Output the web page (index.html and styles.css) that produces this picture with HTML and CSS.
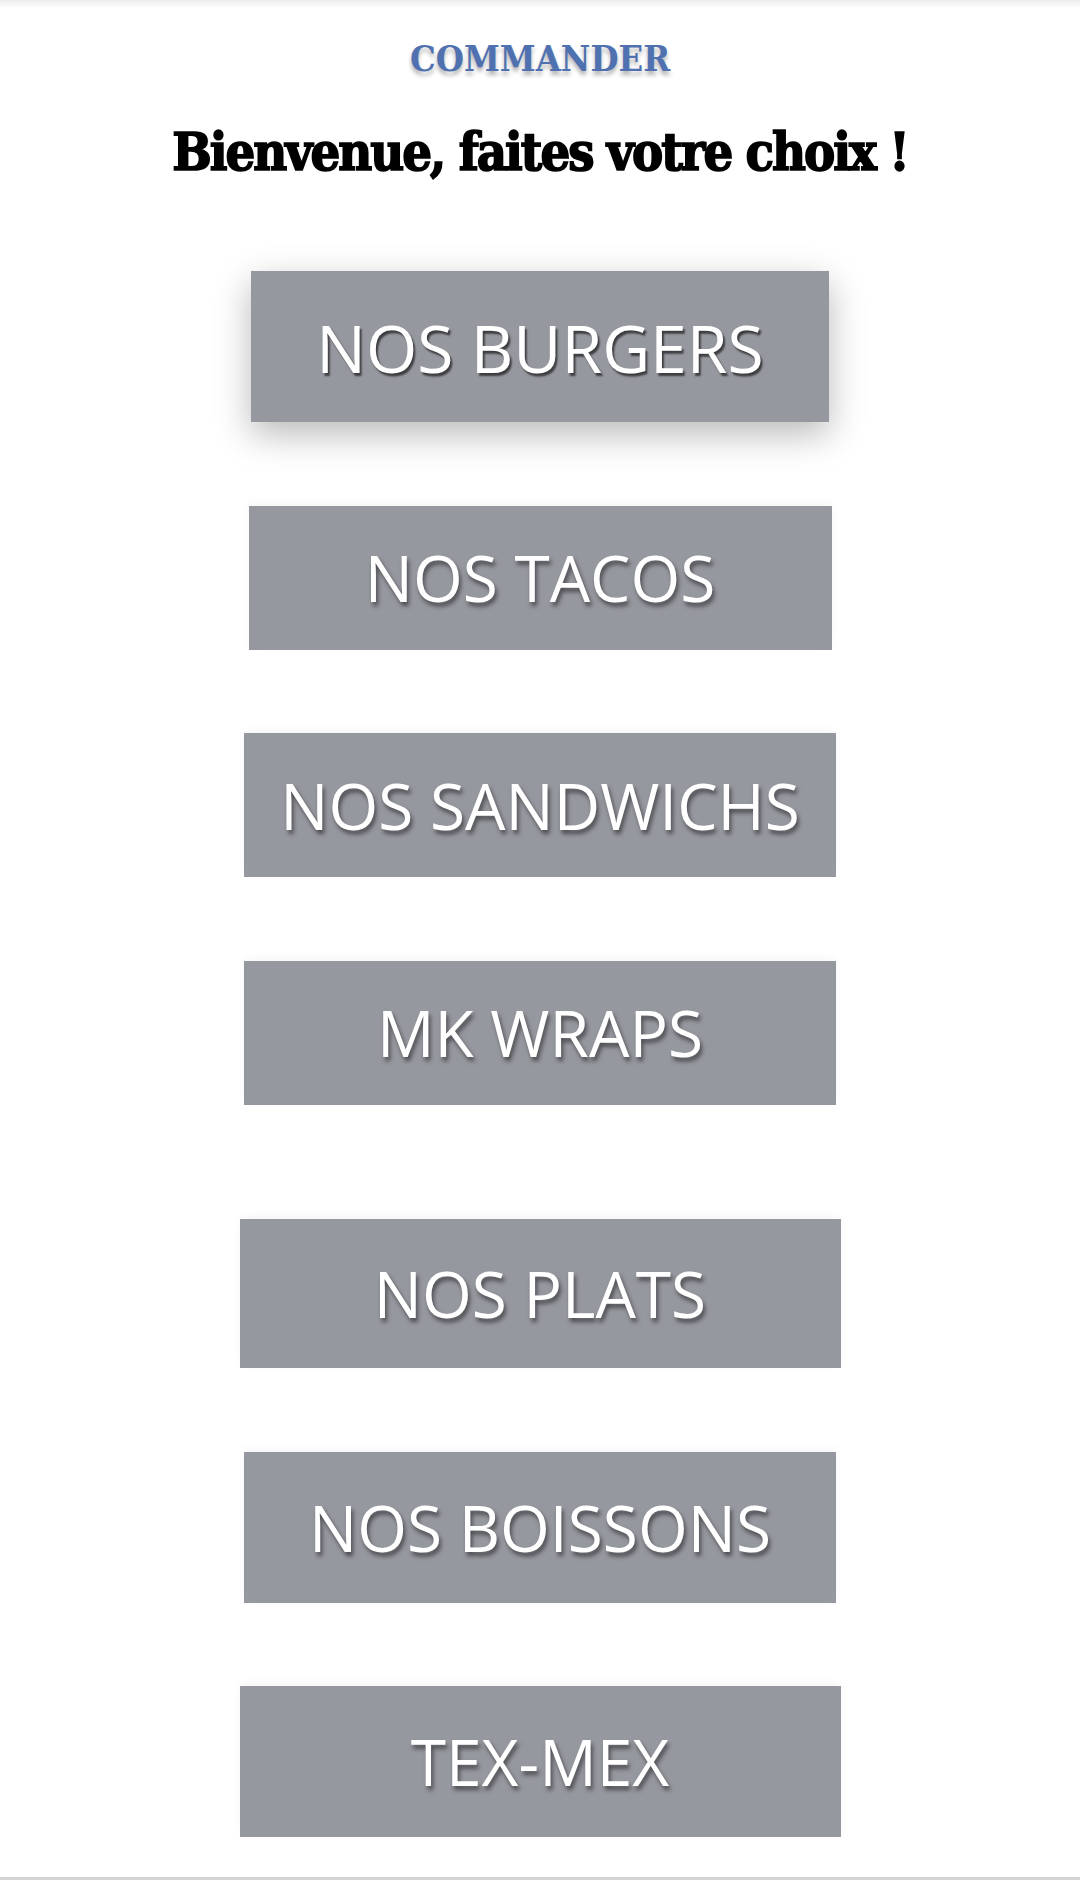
FILE: index.html
```html
<!DOCTYPE html>
<html lang="fr">
<head>
    <meta charset="UTF-8">
    <meta name="viewport" content="width=device-width, initial-scale=1.0">
    <title>Commander</title>
    <link rel="stylesheet" href="styles.css">
</head>
<body>
    <div class="topbar"></div>
    <main class="page">
        <h2 class="title">COMMANDER</h2>
        <h1 class="welcome">Bienvenue, faites votre choix !</h1>

        <nav class="menu">
            <a class="menu-btn menu-btn--active" href="#">NOS BURGERS</a>
            <a class="menu-btn menu-btn--short menu-btn--narrow" href="#">NOS TACOS</a>
            <a class="menu-btn menu-btn--short" href="#">NOS SANDWICHS</a>
            <a class="menu-btn menu-btn--short" href="#">MK WRAPS</a>
            <a class="menu-btn menu-btn--spaced menu-btn--wide" href="#">NOS PLATS</a>
            <a class="menu-btn" href="#">NOS BOISSONS</a>
            <a class="menu-btn menu-btn--wide" href="#">TEX-MEX</a>
        </nav>
    </main>
    <div class="bottombar"></div>
</body>
</html>
```

FILE: styles.css
```css
body {
    margin: 0;
    padding: 0;
    background-color: #ffffff;
    font-family: "Open Sans", Arial, sans-serif;
}

.topbar {
    height: 8px;
    background: linear-gradient(#ececec, #ffffff);
}

.page {
    display: flex;
    flex-direction: column;
    align-items: center;
}

.title {
    margin: 28px 0 0;
    font-family: "DejaVu Serif Condensed", "DejaVu Serif", serif;
    font-weight: bold;
    font-size: 36px;
    line-height: 1.25;
    letter-spacing: 0;
    color: #5071b0;
    text-shadow: 0 4px 4px rgba(0, 0, 0, 0.3);
}

.welcome {
    margin: 40px 0 0;
    font-family: "DejaVu Serif Condensed", "DejaVu Serif", serif;
    font-weight: 900;
    font-size: 52px;
    line-height: 1.2;
    letter-spacing: -2px;
    color: #000;
    -webkit-text-stroke: 1.6px #000;
}

.menu {
    display: flex;
    flex-direction: column;
    align-items: center;
    gap: 83.5px;
    margin-top: 88px;
}

.menu-btn {
    display: flex;
    align-items: center;
    justify-content: center;
    width: 592px;
    height: 151px;
    background-color: #96989f;
    color: #ffffff;
    font-size: 64px;
    text-decoration: none;
    text-shadow: 2px 4px 4px rgba(0, 0, 0, 0.5);
    box-shadow: 0 -3px 8px rgba(0, 0, 0, 0.04);
}

.menu-btn--active {
    width: 578px;
    font-size: 66px;
    text-shadow: 2px 3px 2px rgba(0, 0, 0, 0.6);
    box-shadow: 0 12px 34px rgba(0, 0, 0, 0.28);
}

.menu-btn--short {
    height: 144px;
}

.menu-btn--narrow {
    width: 583px;
}

.menu-btn--wide {
    width: 601px;
}

.menu-btn--spaced {
    margin-top: 31px;
    height: 149px;
}

.bottombar {
    margin-top: 40px;
    height: 3px;
    background-color: #d4d4d4;
    box-shadow: 0 2px 4px rgba(0, 0, 0, 0.06);
}
```
